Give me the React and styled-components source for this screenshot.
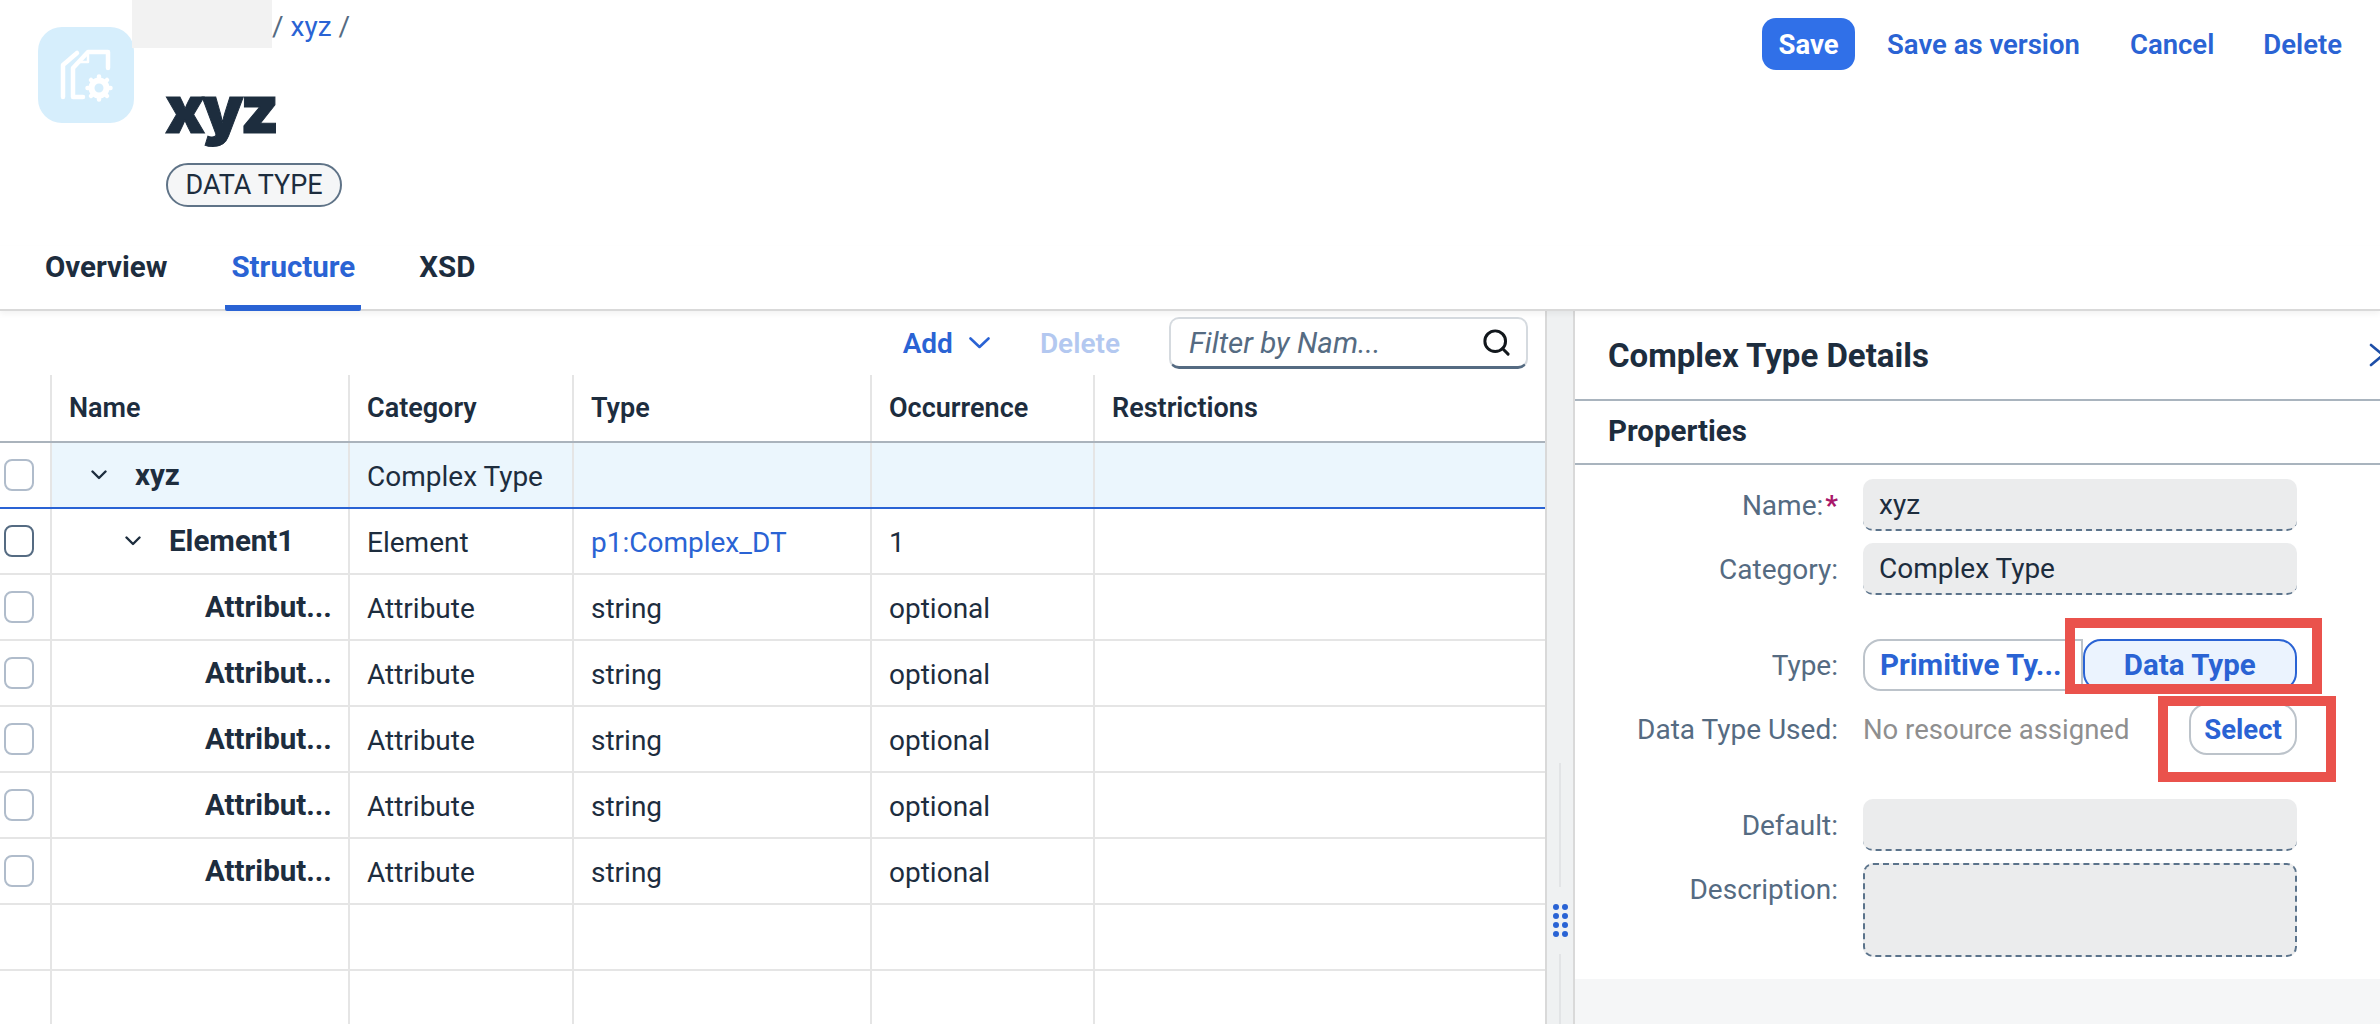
import React from "react";
import styled, { createGlobalStyle } from "styled-components";
import { Search } from "lucide-react";

const blue = "#2a63d4";
const ink = "#1d2d3e";
const slate = "#556b82";

const GlobalStyle = createGlobalStyle`
  html, body {
    margin: 0;
    padding: 0;
    background: #ffffff;
  }
  * {
    box-sizing: border-box;
  }
`;

const Page = styled.div`
  width: 2380px;
  height: 1024px;
  overflow: hidden;
  display: flex;
  flex-direction: column;
  font-family: Roboto, "Noto Sans", sans-serif;
  font-size: 28px;
  color: ${ink};
`;

const Header = styled.header`
  height: 246px;
  flex: none;
  display: flex;
  align-items: flex-start;
  padding-left: 38px;
`;

const Avatar = styled.div`
  width: 96px;
  height: 96px;
  flex: none;
  margin: 27px -2px 0 0;
  border-radius: 24px;
  background: #d6eefc;
`;

const HeadMain = styled.div`
  position: relative;
  flex: 1;
  display: flex;
  flex-direction: column;
  align-items: flex-start;
`;

const Breadcrumb = styled.div`
  display: flex;
  height: 48px;
  line-height: 54px;
  color: ${slate};
  white-space: pre;
`;

const Redacted = styled.div`
  width: 140px;
  height: 48px;
  background: #f2f2f2;
`;

const Crumb = styled.span`
  color: ${blue};
`;

const Title = styled.h1`
  margin: 26px 0 0 33px;
  height: 71px;
  font-family: Inter, sans-serif;
  font-size: 66px;
  line-height: 71px;
  font-weight: 900;
  letter-spacing: -3.5px;
  -webkit-text-stroke: 1px ${ink};
`;

const Chip = styled.div`
  margin: 18px 0 0 34px;
  height: 44px;
  width: 176px;
  display: flex;
  align-items: center;
  justify-content: center;
  border: 2px solid #5f7387;
  border-radius: 22px;
  background: #f5f6f7;
  font-size: 27px;
`;

const Actions = styled.div`
  display: flex;
  align-items: center;
  margin-top: 18px;
  padding-right: 38px;
  font-size: 27.5px;
`;

const SaveButton = styled.div`
  width: 93px;
  height: 52px;
  display: flex;
  align-items: center;
  justify-content: center;
  border-radius: 14px;
  background: #3070e8;
  color: #ffffff;
  font-weight: 700;
`;

const ActionLink = styled.div`
  margin-left: ${(p) => p.$gap}px;
  color: ${blue};
  font-weight: 600;
`;

const TabBar = styled.nav`
  position: relative;
  height: 65px;
  flex: none;
  display: flex;
  gap: 52px;
  padding-left: 39px;
  border-bottom: 2px solid #d9d9d9;
  box-shadow: 0 3px 6px rgba(0, 0, 0, 0.05);
  font-size: 29.5px;
  font-weight: 700;
`;

const Tab = styled.div`
  height: 65px;
  padding: 2px 6px 0;
  line-height: 38px;
  border-bottom: 6px solid ${(p) => (p.$active ? blue : "transparent")};
  border-radius: 0 0 2px 2px;
  color: ${(p) => (p.$active ? blue : ink)};
`;

const Body = styled.main`
  flex: 1;
  min-height: 0;
  display: flex;
`;

const TablePane = styled.section`
  width: 1545px;
  flex: none;
  display: flex;
  flex-direction: column;
`;

const Toolbar = styled.div`
  height: 64px;
  flex: none;
  display: flex;
  align-items: center;
  justify-content: flex-end;
  padding-right: 17px;
`;

const ToolButton = styled.div`
  display: flex;
  align-items: center;
  gap: 16px;
  margin-right: ${(p) => p.$gap}px;
  color: ${(p) => (p.$disabled ? "#b3c8f0" : blue)};
  font-weight: 600;
`;

const Filter = styled.div`
  width: 359px;
  height: 52px;
  display: flex;
  align-items: center;
  justify-content: space-between;
  padding: 0 14px 0 18px;
  border: 2px solid #d5dadf;
  border-bottom: 3px solid ${slate};
  border-radius: 10px;
  color: ${slate};
  font-size: 29.5px;
  font-style: italic;
`;

const Row = styled.div`
  display: grid;
  grid-template-columns: 50px 298px 224px 298px 223px 1fr;
  height: ${(p) => p.$height}px;
  flex: none;
  border-bottom: 2px solid ${(p) => p.$line};
`;

const Cell = styled.div`
  display: flex;
  align-items: center;
  min-width: 0;
  padding-left: 17px;
  padding-top: 3px;
  border-left: 2px solid #e5e5e5;
  background: ${(p) => (p.$selected ? "#ebf6fd" : "transparent")};
  white-space: nowrap;
`;

const HeadCell = styled(Cell)`
  padding-top: 0;
  font-size: 27px;
  font-weight: 600;
`;

const TreeCell = styled(Cell)`
  padding: 0 0 1px ${(p) => p.$indent}px;
  font-size: 29.5px;
  font-weight: 700;
`;

const LinkText = styled.span`
  color: ${blue};
`;

const CheckCell = styled.div`
  display: flex;
  align-items: center;
  padding: 0 0 1px 4px;
`;

const Check = styled.div`
  width: 30px;
  height: 32px;
  border: 2px solid ${(p) => (p.$focus ? slate : "#b0bccb")};
  border-radius: 8px;
  background: #ffffff;
`;

const Twisty = styled.svg`
  width: 16px;
  height: 10px;
  margin-right: 28px;
  flex: none;
`;

const Splitter = styled.div`
  width: 30px;
  flex: none;
  display: flex;
  flex-direction: column;
  align-items: center;
  padding-top: 452px;
  background: #eff1f2;
  border-left: 2px solid #d9d9d9;
  border-right: 2px solid #d9d9d9;
`;

const SplitLine = styled.div`
  width: 2px;
  height: ${(p) => p.$height}px;
  flex: ${(p) => (p.$grow ? 1 : "none")};
  background: #e2e4e6;
`;

const Grip = styled.div`
  display: grid;
  grid-template-columns: 6px 6px;
  gap: 3px 3px;
  margin: 17px 0;
`;

const GripDot = styled.span`
  width: 6px;
  height: 6px;
  border-radius: 50%;
  background: ${blue};
`;

const DetailPane = styled.aside`
  flex: 1;
  min-width: 0;
  display: flex;
  flex-direction: column;
`;

const PanelTitle = styled.div`
  height: 90px;
  flex: none;
  display: flex;
  align-items: center;
  justify-content: space-between;
  padding: 0 0 0 33px;
  border-bottom: 2px solid #a9b4be;
  font-size: 33px;
  font-weight: 700;
`;

const CloseIcon = styled.svg`
  width: 20px;
  height: 24px;
  margin-right: -9px;
  flex: none;
`;

const SectionTitle = styled.div`
  height: 64px;
  flex: none;
  display: flex;
  align-items: center;
  padding: 0 0 2px 33px;
  border-bottom: 2px solid #a9b4be;
  font-size: 29.5px;
  font-weight: 700;
`;

const Form = styled.div`
  flex: 1;
  display: grid;
  grid-template-columns: 263px 434px;
  grid-auto-rows: min-content;
  column-gap: 25px;
  padding-top: 14px;
  align-content: start;
`;

const Label = styled.div`
  height: 52px;
  display: flex;
  justify-content: flex-end;
  align-items: center;
  color: ${slate};
  white-space: nowrap;
`;

const Required = styled.span`
  margin-left: 2px;
  color: #a9176a;
  font-weight: 700;
`;

const Field = styled.div`
  height: 52px;
  margin-bottom: ${(p) => p.$gap}px;
  display: flex;
  align-items: center;
  padding-left: 16px;
  border-radius: 10px;
  border-bottom: 2px dashed #5b738b;
  background: #ebeced;
`;

const TextArea = styled.div`
  height: 94px;
  border: 2px dashed #5b738b;
  border-radius: 10px;
  background: #ebeced;
`;

const Segments = styled.div`
  display: flex;
  height: 52px;
  margin-bottom: 12px;
`;

const SegmentButton = styled.div`
  position: relative;
  width: ${(p) => p.$width}px;
  display: flex;
  align-items: center;
  justify-content: center;
  padding-right: ${(p) => (p.$active ? 0 : 4)}px;
  border: 2px solid ${(p) => (p.$active ? blue : "#bcc3ca")};
  border-radius: ${(p) => (p.$active ? "18px" : "18px 0 0 18px")};
  background: ${(p) => (p.$active ? "#ebf3fe" : "#ffffff")};
  color: ${blue};
  font-size: 29.5px;
  font-weight: 700;
  white-space: nowrap;
`;

const ResourceRow = styled.div`
  height: 52px;
  margin-bottom: 44px;
  display: flex;
  align-items: center;
  justify-content: space-between;
  font-size: 27.5px;
  color: #8f8f8f;
`;

const SelectButton = styled.div`
  position: relative;
  width: 108px;
  height: 52px;
  display: flex;
  align-items: center;
  justify-content: center;
  border: 2px solid #bcc3ca;
  border-radius: 18px;
  color: ${blue};
  font-size: 27.5px;
  font-weight: 700;
`;

const Mark = styled.div`
  position: absolute;
  border: 10px solid #ea524c;
  pointer-events: none;
`;

const TypeMark = styled(Mark)`
  inset: -23px -27px -5px -20px;
`;

const SelectMark = styled(Mark)`
  inset: -9px -41px -29px -33px;
`;

const Footer = styled.div`
  height: 45px;
  flex: none;
  background: #f5f6f7;
`;

const rows = [
  { name: "xyz", indent: 39, twisty: true, category: "Complex Type", selected: true },
  { name: "Element1", indent: 73, twisty: true, category: "Element", type: "p1:Complex_DT", occ: "1", focus: true },
  ...Array.from({ length: 5 }, () => ({
    name: "Attribut...",
    indent: 153,
    category: "Attribute",
    type: "string",
    occ: "optional",
  })),
];

function FileGearIcon() {
  return (
    <svg width="96" height="96" viewBox="0 0 96 96" fill="none">
      <g stroke="#ffffff" strokeWidth="4.5" strokeLinecap="round" strokeLinejoin="round">
        <path d="M25 70V38L39 26" />
        <path d="M45 70H35V41L50 25H70V41" />
        <path d="M50 25V35H42" strokeWidth="2.5" />
      </g>
      <circle cx="61" cy="61" r="7.5" stroke="#ffffff" strokeWidth="6" />
      <g stroke="#ffffff" strokeWidth="4.5" strokeLinecap="round">
        <path d="M61 49.5V51M61 71V72.5M49.5 61H51M71 61H72.5M53 53L54 54M68 68L69 69M69 53L68 54M54 68L53 69" />
      </g>
    </svg>
  );
}

function ChevronDown({ width, height }) {
  return (
    <svg width={width} height={height} viewBox="0 0 21 12" fill="none" preserveAspectRatio="none">
      <path d="M1.5 1.5L10.5 10L19.5 1.5" stroke={blue} strokeWidth="2.6" strokeLinecap="round" strokeLinejoin="round" />
    </svg>
  );
}

function TableRow({ row }) {
  return (
    <Row $height={66} $line={row.selected ? blue : "#e5e5e5"}>
      <CheckCell>{row.name && <Check $focus={row.focus} />}</CheckCell>
      <TreeCell $indent={row.indent} $selected={row.selected}>
        {row.twisty && (
          <Twisty viewBox="0 0 16 10" fill="none">
            <path d="M1.5 1.5L8 8L14.5 1.5" stroke={ink} strokeWidth="2.4" strokeLinecap="round" strokeLinejoin="round" />
          </Twisty>
        )}
        {row.name}
      </TreeCell>
      <Cell $selected={row.selected}>{row.category}</Cell>
      <Cell $selected={row.selected}>
        {row.type === "p1:Complex_DT" ? <LinkText>{row.type}</LinkText> : row.type}
      </Cell>
      <Cell $selected={row.selected}>{row.occ}</Cell>
      <Cell $selected={row.selected} />
    </Row>
  );
}

export default function App() {
  return (
    <Page>
      <GlobalStyle />
      <Header>
        <Avatar>
          <FileGearIcon />
        </Avatar>
        <HeadMain>
          <Breadcrumb>
            <Redacted />
            {"/ "}
            <Crumb>xyz</Crumb>
            {" /"}
          </Breadcrumb>
          <Title>xyz</Title>
          <Chip>DATA TYPE</Chip>
        </HeadMain>
        <Actions>
          <SaveButton>Save</SaveButton>
          <ActionLink $gap={32}>Save as version</ActionLink>
          <ActionLink $gap={50}>Cancel</ActionLink>
          <ActionLink $gap={49}>Delete</ActionLink>
        </Actions>
      </Header>
      <TabBar>
        <Tab>Overview</Tab>
        <Tab $active>Structure</Tab>
        <Tab>XSD</Tab>
      </TabBar>
      <Body>
        <TablePane>
          <Toolbar>
            <ToolButton $gap={50}>
              Add
              <ChevronDown width={21} height={12} />
            </ToolButton>
            <ToolButton $gap={49} $disabled>
              Delete
            </ToolButton>
            <Filter>
              Filter by Nam...
              <Search size={31} color="#12171c" strokeWidth={2.3} />
            </Filter>
          </Toolbar>
          <Row $height={68} $line="#aab3bc">
            <div />
            <HeadCell>Name</HeadCell>
            <HeadCell>Category</HeadCell>
            <HeadCell>Type</HeadCell>
            <HeadCell>Occurrence</HeadCell>
            <HeadCell>Restrictions</HeadCell>
          </Row>
          {rows.map((row, i) => (
            <TableRow key={i} row={row} />
          ))}
          <TableRow row={{}} />
          <TableRow row={{}} />
        </TablePane>
        <Splitter>
          <SplitLine $height={124} />
          <Grip>
            {Array.from({ length: 8 }, (_, i) => (
              <GripDot key={i} />
            ))}
          </Grip>
          <SplitLine $grow />
        </Splitter>
        <DetailPane>
          <PanelTitle>
            Complex Type Details
            <CloseIcon viewBox="0 0 20 24" fill="none">
              <path d="M2 2L14 12L2 22" stroke="#1e4fa8" strokeWidth="2.6" strokeLinecap="round" strokeLinejoin="round" />
            </CloseIcon>
          </PanelTitle>
          <SectionTitle>Properties</SectionTitle>
          <Form>
            <Label>
              Name:<Required>*</Required>
            </Label>
            <Field $gap={12}>xyz</Field>
            <Label>Category:</Label>
            <Field $gap={44}>Complex Type</Field>
            <Label>Type:</Label>
            <Segments>
              <SegmentButton $width={220}>Primitive Ty...</SegmentButton>
              <SegmentButton $width={215} $active>
                Data Type
                <TypeMark />
              </SegmentButton>
            </Segments>
            <Label>Data Type Used:</Label>
            <ResourceRow>
              No resource assigned
              <SelectButton>
                Select
                <SelectMark />
              </SelectButton>
            </ResourceRow>
            <Label>Default:</Label>
            <Field $gap={12} />
            <Label>Description:</Label>
            <TextArea />
          </Form>
          <Footer />
        </DetailPane>
      </Body>
    </Page>
  );
}
